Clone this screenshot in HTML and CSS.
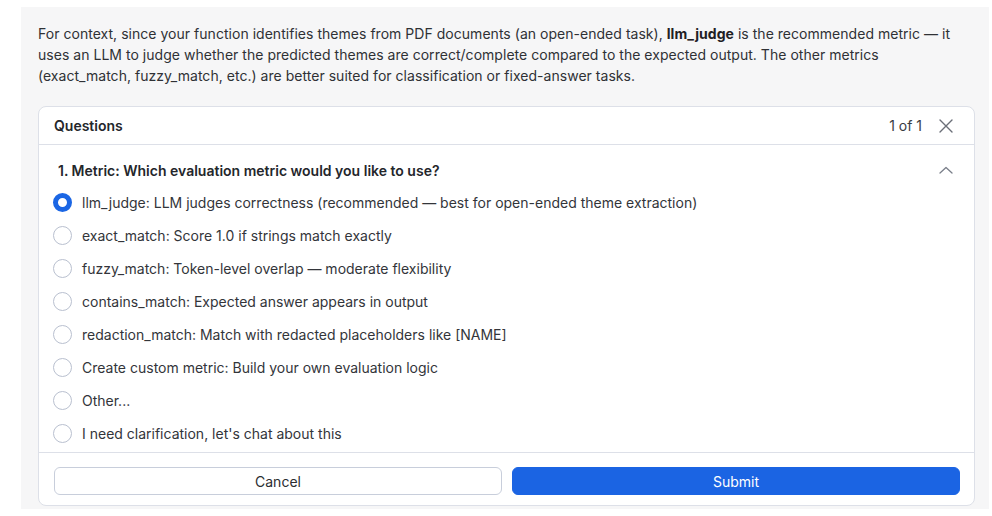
FILE: index.html
```html
<!DOCTYPE html>
<html lang="en">
  <head>
    <meta charset="UTF-8" />
    <title>Questions</title>
    <link rel="stylesheet" href="styles.css">
  </head>
  <body>
    <div class="panel">
      <p class="context">
        For context, since your function identifies themes from PDF documents (an open-ended task), <b>llm_judge</b> is the recommended metric — it uses an LLM to judge whether the predicted themes are correct/complete compared to the expected output. The other metrics (exact_match, fuzzy_match, etc.) are better suited for classification or fixed-answer tasks.
      </p>

      <div class="card">
        <div class="card-header">
          <span class="card-title">Questions</span>
          <div class="header-right">
            <span class="count">1 of 1</span>
            <svg class="icon-close" width="16" height="16" viewBox="0 0 16 16">
              <path d="M2 2 L14 14 M14 2 L2 14" stroke="#6b6f78" stroke-width="1.4" fill="none" stroke-linecap="round" />
            </svg>
          </div>
        </div>

        <div class="question">
          <div class="question-title">
            <span>1. Metric: Which evaluation metric would you like to use?</span>
            <svg class="icon-chevron" width="14" height="8" viewBox="0 0 14 8">
              <path d="M1 7 L7 1.5 L13 7" stroke="#7a7f8a" stroke-width="1.3" fill="none" stroke-linecap="round" stroke-linejoin="round" />
            </svg>
          </div>

          <div class="options">
            <label class="option">
              <span class="radio checked"></span>
              <span>llm_judge: LLM judges correctness (recommended — best for open-ended theme extraction)</span>
            </label>
            <label class="option">
              <span class="radio"></span>
              <span>exact_match: Score 1.0 if strings match exactly</span>
            </label>
            <label class="option">
              <span class="radio"></span>
              <span>fuzzy_match: Token-level overlap — moderate flexibility</span>
            </label>
            <label class="option">
              <span class="radio"></span>
              <span>contains_match: Expected answer appears in output</span>
            </label>
            <label class="option">
              <span class="radio"></span>
              <span>redaction_match: Match with redacted placeholders like [NAME]</span>
            </label>
            <label class="option">
              <span class="radio"></span>
              <span>Create custom metric: Build your own evaluation logic</span>
            </label>
            <label class="option">
              <span class="radio"></span>
              <span>Other...</span>
            </label>
            <label class="option">
              <span class="radio"></span>
              <span>I need clarification, let's chat about this</span>
            </label>
          </div>
        </div>

        <div class="card-footer">
          <button class="btn btn-cancel">Cancel</button>
          <button class="btn btn-submit">Submit</button>
        </div>
      </div>
    </div>
  </body>
</html>
```

FILE: styles.css
```css
body {
  margin: 0;
  padding: 0;
  background-color: #ffffff;
  font-family: Inter, "Noto Sans", sans-serif;
  color: #2d2f33;
}

.panel {
  margin: 7px 3px 0 21px;
  height: 502px;
  box-sizing: border-box;
  padding: 16px 14px 0 17px;
  background-color: #f6f6f7;
  overflow: hidden;
}

.context {
  margin: 0 0 20px;
  max-width: 920px;
  font-size: 14px;
  line-height: 21px;
  letter-spacing: 0.03px;
  color: #2f3135;
}

.context b {
  font-weight: 700;
  color: #1f2024;
}

.card {
  background-color: #ffffff;
  border: 1px solid #dde0e8;
  border-radius: 8px;
  height: 400px;
  box-sizing: border-box;
  overflow: hidden;
}

.card-header {
  display: flex;
  justify-content: space-between;
  align-items: center;
  height: 37px;
  padding: 0 20px 0 15px;
  border-bottom: 1px solid #dde0e8;
}

.card-title {
  font-size: 14px;
  font-weight: 600;
  color: #24262b;
}

.header-right {
  display: flex;
  align-items: center;
  gap: 16px;
}

.count {
  font-size: 14px;
  color: #3a3c42;
}

.question {
  padding: 15px 20px 2px 14px;
}

.question-title {
  display: flex;
  justify-content: space-between;
  align-items: center;
  height: 20px;
  padding-left: 5px;
  font-size: 14px;
  font-weight: 600;
  color: #24262b;
}

.icon-chevron {
  margin-right: 1px;
}

.options {
  margin-top: 6px;
}

.option {
  display: flex;
  align-items: center;
  gap: 10px;
  height: 33px;
  font-size: 14px;
  color: #33353a;
}

.radio {
  width: 19px;
  height: 19px;
  box-sizing: border-box;
  border: 1px solid #b9c0cf;
  border-radius: 50%;
  background-color: #ffffff;
  flex-shrink: 0;
}

.radio.checked {
  border: 5px solid #1b66e4;
}

.card-footer {
  display: flex;
  gap: 10px;
  padding: 14px 14px 0 15px;
  border-top: 1px solid #dde0e8;
}

.btn {
  flex: 1;
  height: 28px;
  border-radius: 6px;
  font-family: Inter, "Noto Sans", sans-serif;
  font-size: 14px;
  cursor: pointer;
}

.btn-cancel {
  background-color: #ffffff;
  border: 1px solid #c8cedb;
  color: #2b2d31;
}

.btn-submit {
  background-color: #1b64e3;
  border: 1px solid #1b64e3;
  color: #ffffff;
}
```
